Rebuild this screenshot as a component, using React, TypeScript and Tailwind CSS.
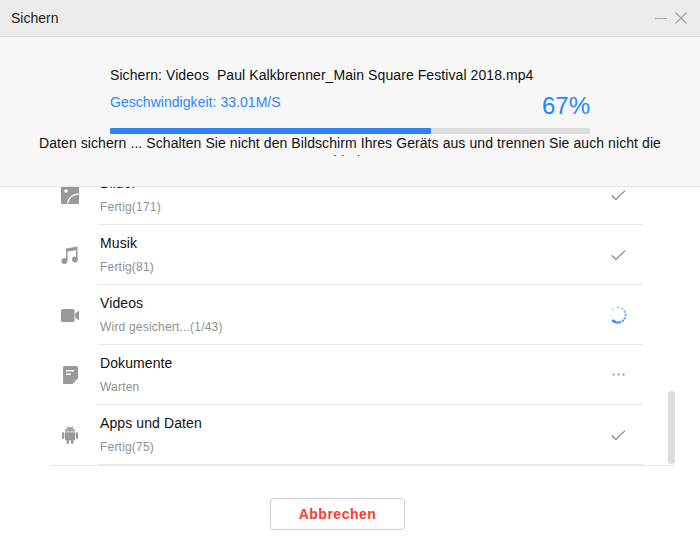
import React from "react";

function ImageIcon() {
  return (
    <svg width="18" height="18" viewBox="0 0 18 18">
      <rect width="18" height="18" rx="1.5" fill="#999999" />
      <circle cx="5" cy="5" r="1.7" fill="#ffffff" />
      <path d="M6.5 17.5 C7.5 11.5 11 8.5 17.5 8" fill="none" stroke="#ffffff" strokeWidth="1.4" />
    </svg>
  );
}

function MusicIcon() {
  return (
    <svg width="18" height="18" viewBox="0 0 18 18" fill="#999999">
      <path d="M5 2.5 L16.5 0.5 V13.5 H15 V4.2 L6.5 5.6 V15 H5 Z" />
      <circle cx="3.4" cy="15" r="3" />
      <circle cx="13.9" cy="13.5" r="2.9" />
    </svg>
  );
}

function VideoIcon() {
  return (
    <svg width="18" height="13" viewBox="0 0 18 13" fill="#999999">
      <rect width="13.5" height="13" rx="1.5" />
      <path d="M14.2 4.6 L18 1.6 V11.4 L14.2 8.4 Z" />
    </svg>
  );
}

function DocIcon() {
  return (
    <svg width="15" height="18" viewBox="0 0 15 18">
      <path d="M1.5 0 H13.5 A1.5 1.5 0 0 1 15 1.5 V12.5 L9.5 18 H1.5 A1.5 1.5 0 0 1 0 16.5 V1.5 A1.5 1.5 0 0 1 1.5 0 Z" fill="#999999" />
      <rect x="3" y="4" width="8" height="1.5" fill="#ffffff" />
      <rect x="3" y="7.5" width="5" height="1.5" fill="#ffffff" />
      <path d="M10.5 17.5 V13.5 H14.5 Z" fill="#b5b5b5" />
    </svg>
  );
}

function AndroidIcon() {
  return (
    <svg width="16" height="18" viewBox="0 0 16 18" fill="#999999">
      <path d="M3 5.5 C3 3 5 1.2 8 1.2 C11 1.2 13 3 13 5.5 Z" />
      <path d="M5 0 L6.4 2 M11 0 L9.6 2" stroke="#999999" strokeWidth="0.7" />
      <circle cx="6" cy="3.6" r="0.6" fill="#ffffff" />
      <circle cx="10" cy="3.6" r="0.6" fill="#ffffff" />
      <path d="M3 6.2 H13 V13.5 A1 1 0 0 1 12 14.5 H4 A1 1 0 0 1 3 13.5 Z" />
      <rect x="0" y="6.2" width="2.3" height="7" rx="1.15" />
      <rect x="13.7" y="6.2" width="2.3" height="7" rx="1.15" />
      <rect x="4.6" y="13.5" width="2.4" height="4.5" rx="1.2" />
      <rect x="9" y="13.5" width="2.4" height="4.5" rx="1.2" />
    </svg>
  );
}

function Check() {
  return (
    <svg className="mt-[1px]" width="15" height="11" viewBox="0 0 15 11" fill="none" stroke="#808080" strokeWidth="1.1">
      <path d="M0.7 5.5 L5 9.5 L14 0.7" />
    </svg>
  );
}

function Dots() {
  return (
    <svg width="13" height="3" viewBox="0 0 13 3" fill="#999999">
      <rect x="0.5" y="0.5" width="2" height="2" />
      <rect x="5.5" y="0.5" width="2" height="2" />
      <rect x="10.5" y="0.5" width="2" height="2" />
    </svg>
  );
}

function Spinner() {
  // dots round the ring, getting stronger clockwise towards the bottom
  const dots = [
    { a: -180, o: 0.08 },
    { a: -135, o: 0.2 },
    { a: -90, o: 0.35 },
    { a: -55, o: 0.4 },
    { a: -25, o: 0.55 },
    { a: 0, o: 0.6 },
    { a: 25, o: 0.65 },
    { a: 50, o: 0.75 },
    { a: 75, o: 0.85 },
    { a: 95, o: 0.95 },
    { a: 115, o: 1 },
    { a: 130, o: 1 },
  ];
  return (
    <svg width="20" height="20" viewBox="0 0 20 20">
      {dots.map((d) => (
        <circle
          key={d.a}
          cx={10 + 7.6 * Math.cos((d.a * Math.PI) / 180)}
          cy={10 + 7.6 * Math.sin((d.a * Math.PI) / 180)}
          r="1.3"
          fill="#1f86f5"
          opacity={d.o}
        />
      ))}
    </svg>
  );
}

const rows = [
  { icon: <ImageIcon />, name: "Bilder", status: "Fertig(171)", right: <Check /> },
  { icon: <MusicIcon />, name: "Musik", status: "Fertig(81)", right: <Check /> },
  { icon: <VideoIcon />, name: "Videos", status: "Wird gesichert...(1/43)", right: <Spinner /> },
  { icon: <DocIcon />, name: "Dokumente", status: "Warten", right: <Dots /> },
  { icon: <AndroidIcon />, name: "Apps und Daten", status: "Fertig(75)", right: <Check /> },
];

export default function App() {
  return (
    <div className="relative w-[700px] h-[560px] overflow-hidden bg-white font-['Liberation_Sans',Arial,sans-serif]">
      <div className="relative z-10 h-[37px] flex items-center justify-between pl-[11px] pr-[13px] bg-[#ebebeb] border-b border-[#dcdcdc]">
        <span className="text-[14px] text-[#222222]">Sichern</span>
        <div className="flex items-center gap-[8px]">
          <div className="w-[12px] h-px bg-[#a8a8a8]" />
          <svg width="12" height="12" viewBox="0 0 12 12" stroke="#a0a0a0" strokeWidth="1.1">
            <path d="M0.5 0.5 L11.5 11.5 M11.5 0.5 L0.5 11.5" />
          </svg>
        </div>
      </div>

      <div className="relative z-10 h-[150px] bg-[#f7f7f7] border-b border-[#e4e4e4]">
        <div className="flex flex-col w-[480px] ml-[110px] pt-[30px]">
          <p className="text-[14px] leading-[16px] tracking-[0.08px] text-[#111111] whitespace-pre">
            Sichern: Videos  Paul Kalkbrenner_Main Square Festival 2018.mp4
          </p>
          <div className="flex justify-between items-start h-[30px] mt-[10px]">
            <span className="text-[14px] leading-[18px] tracking-[0.04px] text-[#2c86ff]">Geschwindigkeit: 33.01M/S</span>
            <span className="text-[24px] leading-[28px] -mt-[1px] text-[#1f86ff]">67%</span>
          </div>
          <div className="h-[6px] mt-[5px] rounded-[1px] bg-[#dddddd]">
            <div className="w-[321px] h-full rounded-[1px] bg-[#3080f8]" />
          </div>
        </div>
        <p className="w-[640px] mx-auto h-[22px] overflow-hidden text-center text-[14px] leading-[18px] tracking-[0.08px] text-[#111111]">
          Daten sichern ... Schalten Sie nicht den Bildschirm Ihres Geräts aus und trennen Sie auch nicht die Verbindung.
        </p>
      </div>

      <div className="-mt-[22px] flex flex-col">
        {rows.map((r) => (
          <div key={r.name} className="flex h-[60px] ml-[50px] w-[593px]">
            <div className="w-[48px] shrink-0 pl-[1px] pr-[9px] flex items-center justify-center">{r.icon}</div>
            <div className="flex-1 flex items-center border-b border-[#e8e8e8] pl-[2px]">
              <div className="flex-1 flex flex-col pb-[1px]">
                <span className="text-[14px] leading-[18px] tracking-[0.1px] text-[#111111]">{r.name}</span>
                <span className="text-[12px] leading-[16px] mt-[7px] tracking-[0.2px] text-[#8f8f8f]">{r.status}</span>
              </div>
              <div className="w-[20px] mr-[15px] flex justify-center">{r.right}</div>
            </div>
          </div>
        ))}
        <div className="ml-[50px] w-[625px] h-px bg-[#e8e8e8]" />
      </div>

      <div className="absolute left-[668px] top-[391px] w-[7px] h-[73px] rounded-[3px] bg-[#dcdcdc]" />

      <div className="flex justify-start ml-[270px] mt-[32px]">
        <button className="w-[135px] h-[32px] rounded-[4px] border border-[#cccccc] bg-white text-[14px] font-bold tracking-[0.5px] text-[#ff3b2f]">
          Abbrechen
        </button>
      </div>
    </div>
  );
}
